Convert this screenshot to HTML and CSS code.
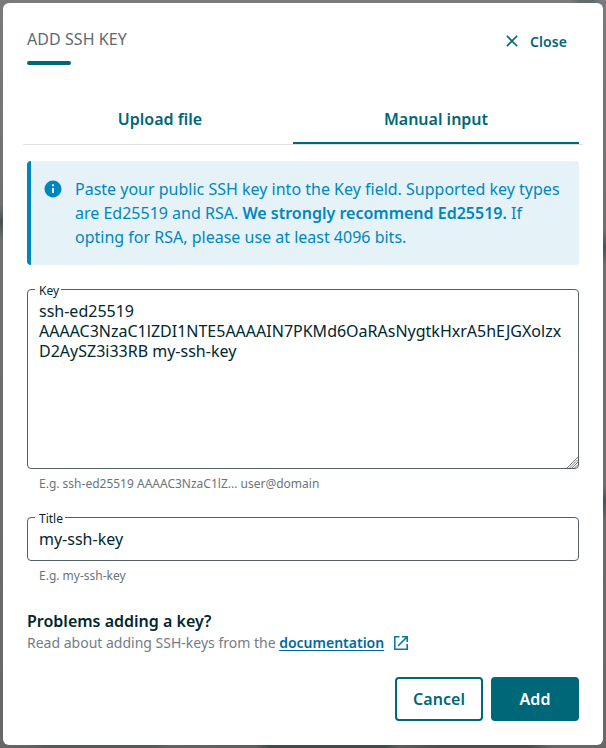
FILE: index.html
```html
<!DOCTYPE html>
<html lang="en">
<head>
<meta charset="utf-8">
<title>Add SSH key</title>
<link rel="stylesheet" href="styles.css">
</head>
<body>
<main class="dialog">
  <header class="header">
    <h1 class="title">ADD SSH KEY</h1>
    <button class="close"><svg width="12" height="12" viewBox="0 0 12 12"><path d="M.8.8l10.4 10.4M11.2.8L.8 11.2" fill="none" stroke="currentColor" stroke-width="1.6"/></svg><span>Close</span></button>
  </header>
  <nav class="tabs">
    <div class="tab">Upload file</div>
    <div class="tab active">Manual input</div>
  </nav>
  <section class="alert">
    <svg class="info" width="18" height="18" viewBox="0 0 18 18"><circle cx="9" cy="9" r="8.5" fill="currentColor"/><path d="M8 4.3h2v2H8zM8 8h2v5H8z" fill="#e5f2f8"/></svg>
    <p>Paste your public SSH key into the Key field. Supported key types are Ed25519 and RSA. <b>We strongly recommend Ed25519.</b> If opting for RSA, please use at least 4096 bits.</p>
  </section>
  <div class="field">
    <label class="label" for="key">Key</label>
    <div class="area-wrap">
      <textarea id="key" class="control area" spellcheck="false">ssh-ed25519 AAAAC3NzaC1lZDI1NTE5AAAAIN7PKMd6OaRAsNygtkHxrA5hEJGXolzxD2AySZ3i33RB my-ssh-key</textarea>
      <svg class="grip" width="11" height="11" viewBox="0 0 11 11" fill="none" stroke="#666" stroke-width=".9"><path d="M0 11L11 0M2.5 11L11 2.5M5 11L11 5M7.5 11L11 7.5"/></svg>
    </div>
    <div class="hint">E.g. ssh-ed25519 AAAAC3NzaC1lZ... user@domain</div>
  </div>
  <div class="field">
    <label class="label" for="name">Title</label>
    <input id="name" class="control input" value="my-ssh-key">
    <div class="hint">E.g. my-ssh-key</div>
  </div>
  <section class="help">
    <h2>Problems adding a key?</h2>
    <p>Read about adding SSH-keys from the <a href="#">documentation</a><svg width="14" height="14" viewBox="0 0 14 14" fill="none" stroke="currentColor" stroke-width="1.6"><path d="M5.5 .8H.8v12.4h12.4V8M8 .8h5.2V6M13 1L4.2 9.8"/></svg></p>
  </section>
  <footer class="actions">
    <button class="button">Cancel</button>
    <button class="button primary">Add</button>
  </footer>
</main>
</body>
</html>
```
FILE: styles.css
```css
* { box-sizing: border-box; margin: 0; }
body {
  height: 748px;
  padding: 3px;
  overflow: hidden;
  background:
    linear-gradient(to right, #666 0, #626262 30px, #535a5c 45px, #535a5c 155px, #626262 170px, #5f5f5f 255px, #3f4a4d 270px, #3f4a4d 385px, #5c5c5c 400px, #4c4c4c 440px, #4c4c4c 530px, #666 550px) bottom / 100% 3px no-repeat,
    linear-gradient(to right, #7b7b7b 570px, #5f6c70 580px, #5f6c70 592px, #7b7b7b 602px) top / 100% 3px no-repeat,
    linear-gradient(to bottom, #7b7b7b 0, #707070 205px, #485052 222px, #707070 240px, #686868 748px) left / 3px 100% no-repeat,
    linear-gradient(to bottom, #7b7b7b 0, #707070 230px, #485356 248px, #707070 265px, #707070 485px, #485356 502px, #6b6b6b 520px, #686868 748px);
  font: 16px/24px "Noto Sans", sans-serif;
  color: #00282e;
}
button { font: inherit; }
.dialog {
  width: 600px;
  height: 742px;
  padding: 24px;
  background: #fff;
  border-radius: 6px;
}
.header { display: flex; justify-content: space-between; align-items: flex-start; height: 67px; }
.title { font-size: 16px; font-weight: 400; letter-spacing: .06px; color: #5d696f; }
.title::after { content: ""; display: block; width: 44px; height: 4px; margin-top: 10px; border-radius: 2px; background: #006778; }
.close {
  display: flex;
  align-items: center;
  gap: 12px;
  padding: 3px 12px 0 0;
  border: 0;
  background: none;
  font-size: 14px;
  font-weight: 600;
  letter-spacing: .08px;
  color: #006778;
}
.close svg { margin-top: -2px; }
.tabs { display: flex; height: 51px; margin: 0 -4px 16px; padding: 0 4px; border-bottom: 1px solid #dfe2e3; }
.tab { width: 266px; padding-top: 13px; text-align: center; font-weight: 600; color: #006778; }
.tab.active { width: 286px; border-bottom: 2px solid #006778; }
.alert {
  display: flex;
  gap: 13px;
  height: 104px;
  padding: 16px 16px 16px 13px;
  border-left: 4px solid #0086be;
  border-radius: 4px;
  background: #e5f2f8;
  color: #0086be;
}
.alert b { font-weight: 600; }
.alert p { flex: 1; }
.info { flex: none; margin-top: 3px; }
.field { position: relative; margin-top: 24px; }
.label { position: absolute; z-index: 1; left: 8px; top: -6px; padding: 0 2px 0 4px; background: #fff; font-size: 12px; line-height: 16px; height: 14px; }
.control { display: block; width: 100%; border: 1px solid #536066; border-radius: 4px; background: #fff; color: inherit; font: inherit; line-height: 20px; outline: 0; }
.area-wrap { position: relative; }
.area { height: 180px; padding: 11px; word-break: normal; overflow-wrap: anywhere; resize: none; }
.grip { position: absolute; right: 1px; bottom: 1px; }
.input { height: 44px; padding: 0 11px; }
.hint { padding: 6px 12px 0; font-size: 12px; line-height: 18px; color: #69757b; }
.help { margin-top: 24px; }
.help h2 { font-size: 16px; line-height: 24px; font-weight: 600; }
.help p { display: flex; align-items: center; font-size: 14px; line-height: 20px; color: #747c88; white-space: pre; }
.help a { font-weight: 600; color: #006a9d; text-underline-offset: 2px; }
.help svg { margin-left: 10px; color: #0879a7; }
.actions { display: flex; justify-content: flex-end; gap: 8px; margin-top: 24px; }
.button { width: 88px; height: 44px; padding: 0; border: 2px solid #006778; border-radius: 4px; background: #fff; font-weight: 600; letter-spacing: .05px; color: #006778; }
.primary { background: #006778; color: #fff; }
```
